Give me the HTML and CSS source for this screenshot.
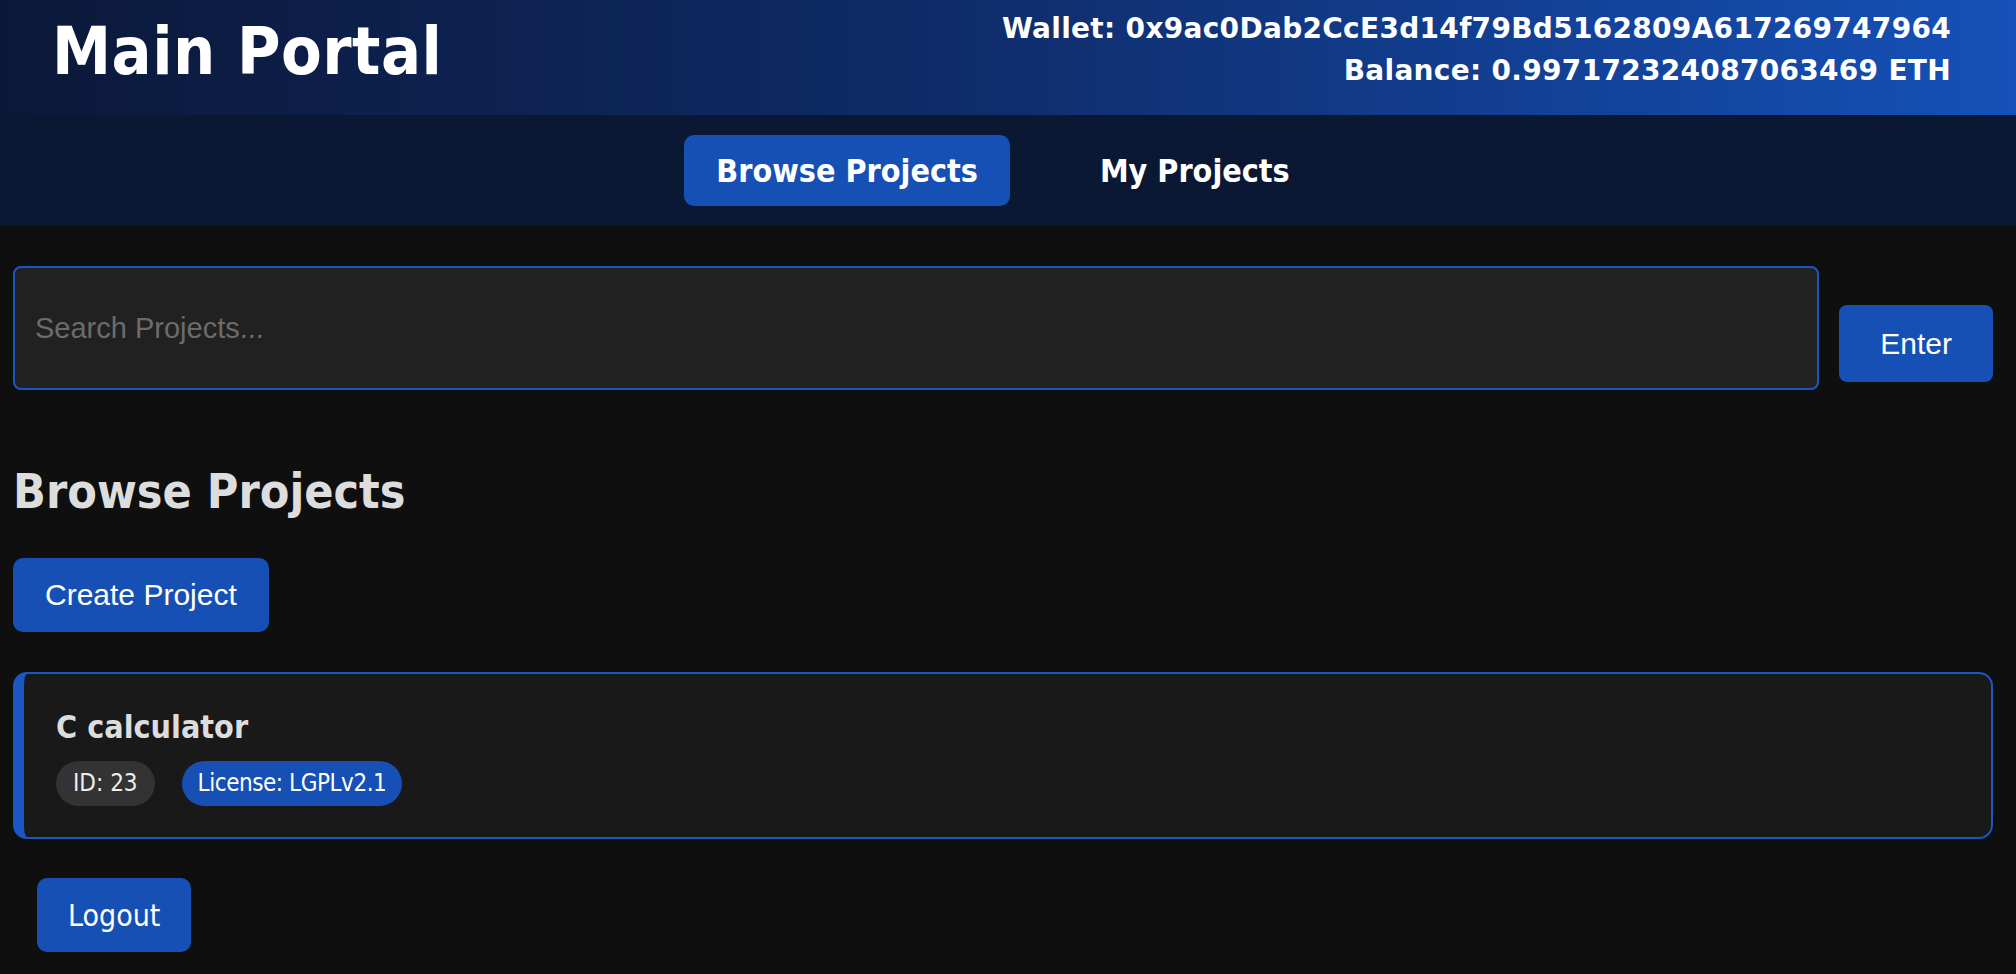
FILE: index.html
```html
<!DOCTYPE html>
<html>
<head>
<meta charset="utf-8">
<link rel="stylesheet" href="styles.css">
</head>
<body>
<header class="topbar">
  <h1 class="brand">Main Portal</h1>
  <div class="wallet">
    <div>Wallet: 0x9ac0Dab2CcE3d14f79Bd5162809A617269747964</div>
    <div>Balance: 0.997172324087063469 ETH</div>
  </div>
</header>
<nav class="tabs">
  <button class="tab active">Browse Projects</button>
  <button class="tab">My Projects</button>
</nav>
<main class="content">
  <div class="search-row">
    <input class="search" type="text" placeholder="Search Projects...">
    <button class="btn enter">Enter</button>
  </div>
  <h2 class="section-title">Browse Projects</h2>
  <button class="btn create">Create Project</button>
  <div class="card">
    <h3 class="card-title">C calculator</h3>
    <div class="badges">
      <span class="badge id">ID: 23</span>
      <span class="badge license">License: LGPLv2.1</span>
    </div>
  </div>
  <button class="btn logout">Logout</button>
</main>
</body>
</html>
```
FILE: styles.css
```css
* { box-sizing: border-box; }
body {
  margin: 0;
  background: #0f0f0f;
  font-family: "DejaVu Sans Condensed", "DejaVu Sans", sans-serif;
  font-stretch: condensed;
  color: #fff;
  min-height: 974px;
}
.topbar {
  height: 115px;
  display: flex;
  justify-content: space-between;
  align-items: flex-start;
  padding: 0 65px 0 52px;
  background: linear-gradient(90deg, #0b1838 0%, #0f2a66 45%, #1551b8 100%);
}
.brand {
  margin: 19px 0 0;
  font-size: 66px;
  line-height: 1;
  font-weight: bold;
  letter-spacing: 0.5px;
}
.wallet {
  margin-top: 8px;
  text-align: right;
  font-family: "DejaVu Sans", sans-serif;
  font-stretch: normal;
  font-size: 28px;
  line-height: 42px;
  font-weight: bold;
  letter-spacing: 0.3px;
}
.tabs {
  height: 111px;
  background: #0b1833;
  display: flex;
  justify-content: center;
  align-items: center;
  gap: 58px;
  padding-right: 10px;
}
.tab {
  height: 71px;
  padding: 0 32px;
  border: none;
  border-radius: 10px;
  background: transparent;
  color: #fff;
  font-family: inherit;
  font-stretch: condensed;
  font-size: 32px;
  font-weight: bold;
}
.tab.active { background: #1650b5; }
.content {
  padding: 40px 23px 0 13px;
}
.search-row {
  display: flex;
  align-items: flex-start;
  gap: 20px;
}
.search {
  flex: 1;
  height: 124px;
  padding: 0 20px;
  background: #212121;
  border: 2px solid #1a56c4;
  border-radius: 8px;
  color: #ddd;
  font-family: "Liberation Sans", Arial, sans-serif;
  font-size: 29px;
  outline: none;
}
.search::placeholder { color: #6b6b6b; }
.btn {
  border: none;
  background: #1650b5;
  color: #fff;
  font-family: "Liberation Sans", Arial, sans-serif;
  font-size: 30px;
  border-radius: 8px;
  display: block;
}
.enter {
  margin-top: 39px;
  height: 77px;
  padding: 0 41px;
}
.section-title {
  margin: 73px 0 0;
  font-size: 48px;
  line-height: 56px;
  font-weight: bold;
  color: #dddddd;
}
.create {
  margin-top: 39px;
  height: 74px;
  padding: 0 32px;
  border-radius: 10px;
}
.card {
  margin-top: 40px;
  height: 167px;
  background: #191919;
  border: 2px solid #1a56c4;
  border-left-width: 11px;
  border-radius: 14px;
  padding: 34px 32px 0;
}
.card-title {
  margin: 0;
  font-size: 32px;
  line-height: 38px;
  font-weight: bold;
  color: #dddddd;
}
.badges {
  margin-top: 15px;
  display: flex;
  gap: 27px;
}
.badge {
  height: 45px;
  line-height: 45px;
  padding: 0 16px;
  border-radius: 23px;
  font-size: 24px;
  color: #eee;
}
.badge.id { background: #333333; padding: 0 17px; }
.badge.license { background: #1650b5; color: #fff; letter-spacing: -0.45px; }
.logout {
  margin: 39px 0 0 24px;
  height: 74px;
  padding: 0 31px;
  border-radius: 10px;
  font-family: "DejaVu Sans Condensed", "DejaVu Sans", sans-serif;
  font-stretch: condensed;
}
```
